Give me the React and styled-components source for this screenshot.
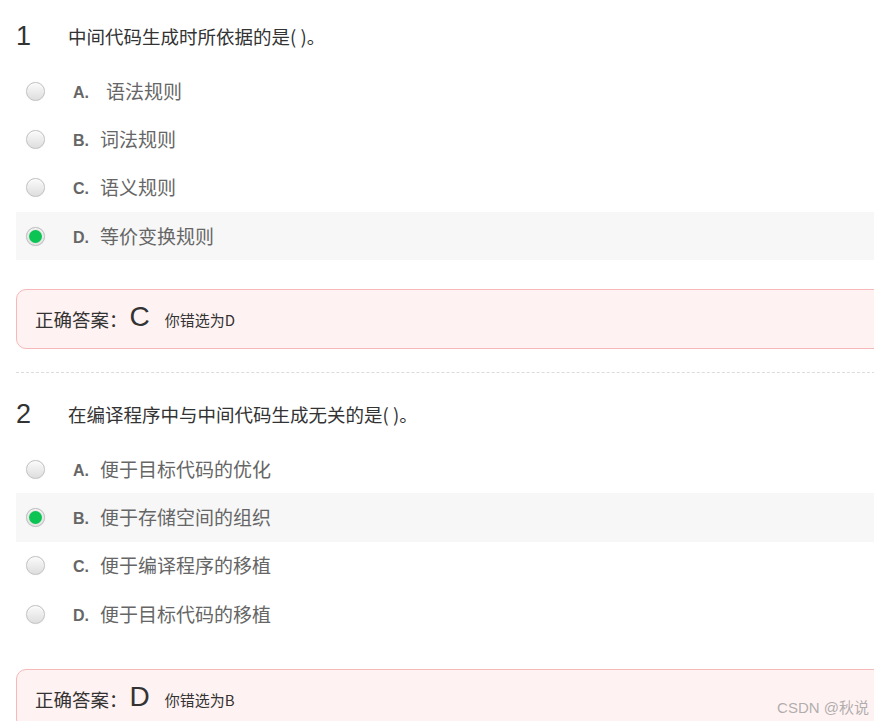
import React from "react";
import styled, { createGlobalStyle } from "styled-components";

const GlobalStyle = createGlobalStyle`
  html, body { margin: 0; padding: 0; background: #fff; overflow: hidden; }
  body { font-family: "Liberation Sans", "Noto Sans CJK SC", sans-serif; }
`;

const Page = styled.div`
  width: 900px;
  padding-left: 16px;
  height: 721px;
  overflow: hidden;
  box-sizing: border-box;
`;

const Question = styled.section`
  padding-top: ${(p) => p.$top}px;
  padding-bottom: 23px;
  border-bottom: ${(p) => (p.$divider ? "1px dashed #dcdcdc" : "none")};
`;

const TitleRow = styled.div`
  display: flex;
  align-items: center;
  height: 40px;
  margin-bottom: 11px;
`;

const Num = styled.span`
  width: 52px;
  font-family: "Liberation Sans", Arial, sans-serif;
  font-size: 27px;
  color: #333;
  line-height: 1;
`;

const TitleText = styled.span`
  font-family: "Noto Sans CJK SC", sans-serif;
  font-size: 18.5px;
  color: #333;
  line-height: 1;
`;

const Options = styled.div`
  display: flex;
  flex-direction: column;
`;

const OptionRow = styled.div`
  display: flex;
  align-items: center;
  height: 48.3px;
  background: ${(p) => (p.$checked ? "#f7f7f7" : "transparent")};
`;

const Radio = styled.span`
  box-sizing: border-box;
  width: 19px;
  height: 19px;
  border-radius: 50%;
  margin-left: 10px;
  margin-right: 28px;
  flex: none;
  display: flex;
  align-items: center;
  justify-content: center;
  border: 1px solid #c2c2c2;
  background: ${(p) =>
    p.$checked ? "#e6e6e6" : "linear-gradient(#fafafa, #dedede)"};
  box-shadow: inset 0 1px 1px rgba(255, 255, 255, 0.8), 0 0 1px rgba(0, 0, 0, 0.15);

  &::after {
    content: "";
    display: ${(p) => (p.$checked ? "block" : "none")};
    width: 13px;
    height: 13px;
    border-radius: 50%;
    background: #0cc453;
  }
`;

const Label = styled.span`
  display: flex;
  align-items: baseline;
  line-height: 1;
`;

const Letter = styled.span`
  font-family: "Liberation Sans", Arial, sans-serif;
  font-weight: bold;
  font-size: 16px;
  color: #666;
  margin-right: ${(p) => (p.$wide ? 17 : 11)}px;
  position: relative;
  top: -1px;
`;

const OptionText = styled.span`
  font-family: "Noto Sans CJK SC", sans-serif;
  font-size: 19px;
  color: #666;
`;

const AnswerBox = styled.div`
  margin-top: ${(p) => p.$mt}px;
  height: 60px;
  box-sizing: border-box;
  border: 1px solid #f6b8b8;
  border-radius: 10px;
  background: #fff2f2;
  display: flex;
  align-items: center;
  padding-left: 18px;
  color: #333;
`;

const AnswerLabel = styled.span`
  font-family: "Noto Sans CJK SC", sans-serif;
  font-size: 18.5px;
  line-height: 1;
`;

const AnswerLetter = styled.span`
  font-family: "Liberation Sans", Arial, sans-serif;
  font-size: 28px;
  margin-left: 2px;
  margin-right: 15px;
  line-height: 1;
  position: relative;
  top: -2px;
`;

const Wrong = styled.span`
  font-family: "Noto Sans CJK SC", sans-serif;
  font-size: 15px;
  line-height: 1;
`;

const Watermark = styled.div`
  position: absolute;
  right: 5px;
  bottom: 4px;
  font-family: "Liberation Sans", "Noto Sans CJK SC", sans-serif;
  font-size: 15px;
  color: rgba(150, 150, 150, 0.75);
`;

const data = [
  {
    n: 1,
    title: "中间代码生成时所依据的是( )。",
    options: [
      ["A.", "语法规则", true],
      ["B.", "词法规则"],
      ["C.", "语义规则"],
      ["D.", "等价变换规则"],
    ],
    checked: 3,
    answer: "C",
    wrong: "D",
    top: 16,
    mt: 29,
  },
  {
    n: 2,
    title: "在编译程序中与中间代码生成无关的是( )。",
    options: [
      ["A.", "便于目标代码的优化"],
      ["B.", "便于存储空间的组织"],
      ["C.", "便于编译程序的移植"],
      ["D.", "便于目标代码的移植"],
    ],
    checked: 1,
    answer: "D",
    wrong: "B",
    top: 21,
    mt: 31,
  },
];

export default function App() {
  return (
    <>
      <GlobalStyle />
      <Page>
        {data.map((q, qi) => (
          <Question key={q.n} $top={q.top} $divider={qi === 0}>
            <TitleRow>
              <Num>{q.n}</Num>
              <TitleText>{q.title}</TitleText>
            </TitleRow>
            <Options>
              {q.options.map(([l, t, wide], i) => (
                <OptionRow key={l} $checked={i === q.checked}>
                  <Radio $checked={i === q.checked} />
                  <Label>
                    <Letter $wide={wide}>{l}</Letter>
                    <OptionText>{t}</OptionText>
                  </Label>
                </OptionRow>
              ))}
            </Options>
            <AnswerBox $mt={q.mt}>
              <AnswerLabel>正确答案：</AnswerLabel>
              <AnswerLetter>{q.answer}</AnswerLetter>
              <Wrong>你错选为{q.wrong}</Wrong>
            </AnswerBox>
          </Question>
        ))}
      </Page>
      <Watermark>CSDN @秋说</Watermark>
    </>
  );
}
